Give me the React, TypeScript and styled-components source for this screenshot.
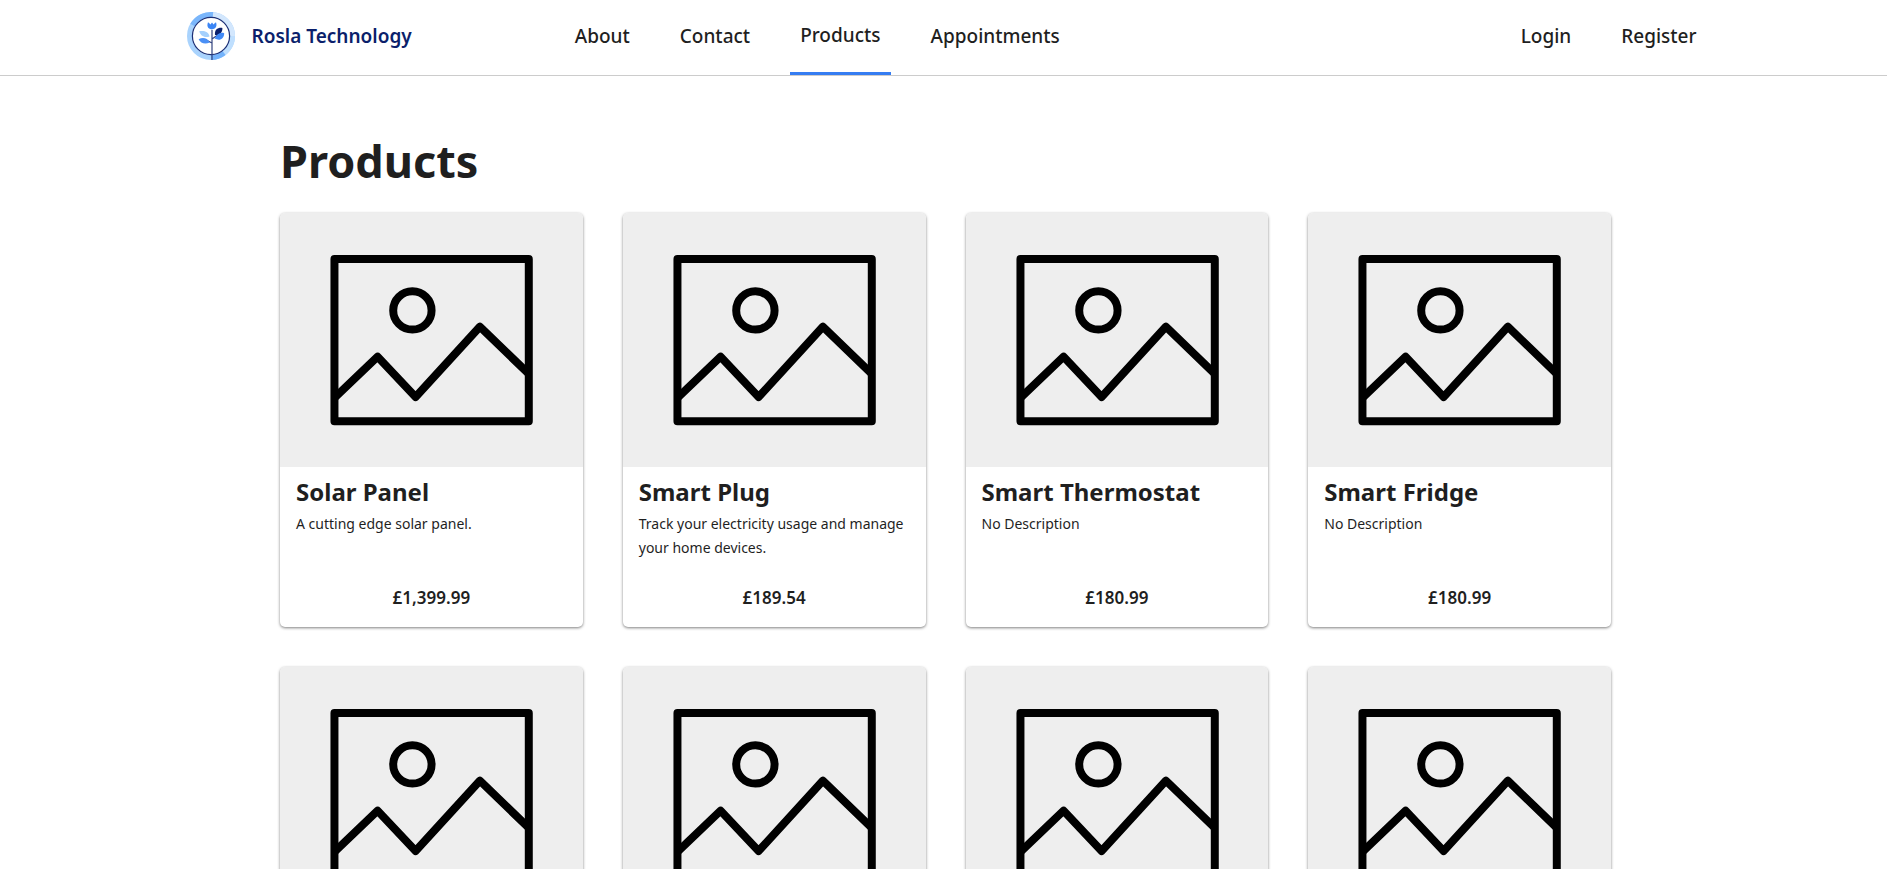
import React from "react";
import styled, { createGlobalStyle } from "styled-components";

const GlobalStyle = createGlobalStyle`
  *, *::before, *::after { box-sizing: border-box; }
  html { scrollbar-width: none; }
  body {
    margin: 0;
    background: #fff;
    color: #1f1f1f;
    font-family: "Noto Sans", "Open Sans", sans-serif;
  }
`;

const Header = styled.header`
  border-bottom: 1px solid #ccc;
`;

const HeaderInner = styled.div`
  display: flex;
  align-items: stretch;
  height: 75px;
  max-width: 1526px;
  margin: 0 auto;
  padding-left: 6px;
`;

const Brand = styled.a`
  display: flex;
  align-items: center;
  gap: 17px;
  height: 72px;
  color: #0b1f6b;
  font-size: 19px;
  font-weight: 600;
  line-height: 28px;
  text-decoration: none;
`;

const Logo = styled.svg`
  width: 48px;
  height: 48px;
`;

const Nav = styled.nav`
  display: flex;
  gap: 30px;
`;

const MainNav = styled(Nav)`
  flex: 1;
  margin-left: 153px;
`;

const NavLink = styled.a<{ $active?: boolean }>`
  display: flex;
  align-items: center;
  padding: 0 10px 3px;
  border-bottom: ${(p) => (p.$active ? "3px solid #357df2" : "0")};
  color: #1f1f1f;
  font-size: 19px;
  font-weight: 500;
  line-height: 28px;
  text-decoration: none;
`;

const Main = styled.main`
  max-width: 1335px;
  margin: 0 auto;
  padding: 53px 0 40px 4px;
`;

const Title = styled.h1`
  margin: 0 0 20px;
  font-size: 45px;
  font-weight: 700;
  line-height: 64px;
`;

const Grid = styled.div`
  display: grid;
  grid-template-columns: repeat(4, 1fr);
  gap: 40px;
`;

const Card = styled.article`
  display: flex;
  flex-direction: column;
  border-radius: 5px;
  background: #fff;
  box-shadow: 0 1px 3px rgba(0, 0, 0, 0.5);
  overflow: hidden;
`;

const Thumb = styled.svg`
  display: block;
  width: 100%;
  background: #eee;
`;

const CardBody = styled.div`
  display: flex;
  flex-direction: column;
  padding: 5px 16px 15px;
`;

const CardTitle = styled.h2`
  margin: 0;
  font-size: 24px;
  font-weight: 700;
  line-height: 40px;
`;

const Description = styled.p`
  min-height: 72px;
  margin: 0;
  font-size: 14px;
  line-height: 24px;
`;

const Price = styled.p`
  margin: 0;
  font-size: 17px;
  font-weight: 600;
  line-height: 28px;
  text-align: center;
`;

const BrandLogo = () => (
  <Logo viewBox="0 0 48 48" aria-hidden="true">
    <g fill="none" strokeWidth="5">
      <circle cx="24" cy="24" r="21.5" stroke="#a9d3fd" />
      <path d="M25 2.5A21.5 21.5 0 0 1 45.5 24" stroke="#d3e7fd" />
      <path d="M45.5 24A21.5 21.5 0 0 1 37 41" stroke="#bfdffe" />
      <path d="M37 41A21.5 21.5 0 0 1 24 45.5" stroke="#74b3fb" />
      <path d="M5.5 13A21.5 21.5 0 0 1 26 2.6" stroke="#7ab6fb" />
    </g>
    <circle cx="24" cy="24" r="18.6" fill="#fff" stroke="#1c2f75" strokeWidth="1.2" />
    <path d="M25 18V48M25 31L20 28.5M25 27L30 23.5" fill="none" stroke="#33437f" strokeWidth="1.2" />
    <path d="M24.8 17.5C20.2 16.5 19.8 13.5 21 10.2C22 11 22.8 11.6 23.4 12.6L25 10.6L26.6 12.6C27.2 11.6 28 11 29 10.2C30.2 13.5 29.4 16.5 24.8 17.5Z" fill="#3c86f5" />
    <path d="M22.5 24.4C17 26.2 13.5 23.5 12.2 19.2C17 18.3 21.6 19.5 22.5 24.4Z" fill="#a4d0fd" />
    <path d="M22.8 30.5C17.5 33 13.6 30.8 11.6 27.2C16 25 20.4 26 22.8 30.5Z" fill="#4a90f6" />
    <path d="M28 23C27.4 17.8 30.5 15.4 35.4 15.9C35.6 20.6 32.5 23.2 28 23Z" fill="#0c216d" />
    <path d="M27.6 26.6C30.6 21.2 34 20.2 37.2 21.2C37 26.6 33 29.4 27.6 26.6Z" fill="#4089f6" />
  </Logo>
);

const PlaceholderImage = () => (
  <Thumb viewBox="0 0 303 254" role="img" aria-label="No image available">
    <g fill="none" stroke="#000" strokeWidth="8" strokeLinejoin="round">
      <rect x="54.5" y="46" width="194.5" height="162.5" />
      <circle cx="132.5" cy="97.5" r="19.2" />
      <path d="M54.5 185L97.7 143.8L135.7 184.2L200 113.8L249 161" />
    </g>
  </Thumb>
);

const navItems = ["About", "Contact", "Products", "Appointments"];
const accountItems = ["Login", "Register"];

const products = [
  { name: "Solar Panel", description: "A cutting edge solar panel.", price: "£1,399.99" },
  { name: "Smart Plug", description: "Track your electricity usage and manage your home devices.", price: "£189.54" },
  { name: "Smart Thermostat", description: "No Description", price: "£180.99" },
  { name: "Smart Fridge", description: "No Description", price: "£180.99" },
];

const upcoming = [1, 2, 3, 4];

export default function App() {
  return (
    <>
      <GlobalStyle />
      <Header>
        <HeaderInner>
          <Brand href="#home">
            <BrandLogo />
            Rosla Technology
          </Brand>
          <MainNav aria-label="Main">
            {navItems.map((item) => (
              <NavLink key={item} href={`#${item.toLowerCase()}`} $active={item === "Products"}>
                {item}
              </NavLink>
            ))}
          </MainNav>
          <Nav aria-label="Account">
            {accountItems.map((item) => (
              <NavLink key={item} href={`#${item.toLowerCase()}`}>
                {item}
              </NavLink>
            ))}
          </Nav>
        </HeaderInner>
      </Header>
      <Main>
        <Title>Products</Title>
        <Grid>
          {products.map((product) => (
            <Card key={product.name}>
              <PlaceholderImage />
              <CardBody>
                <CardTitle>{product.name}</CardTitle>
                <Description>{product.description}</Description>
                <Price>{product.price}</Price>
              </CardBody>
            </Card>
          ))}
          {upcoming.map((id) => (
            <Card key={id}>
              <PlaceholderImage />
            </Card>
          ))}
        </Grid>
      </Main>
    </>
  );
}
